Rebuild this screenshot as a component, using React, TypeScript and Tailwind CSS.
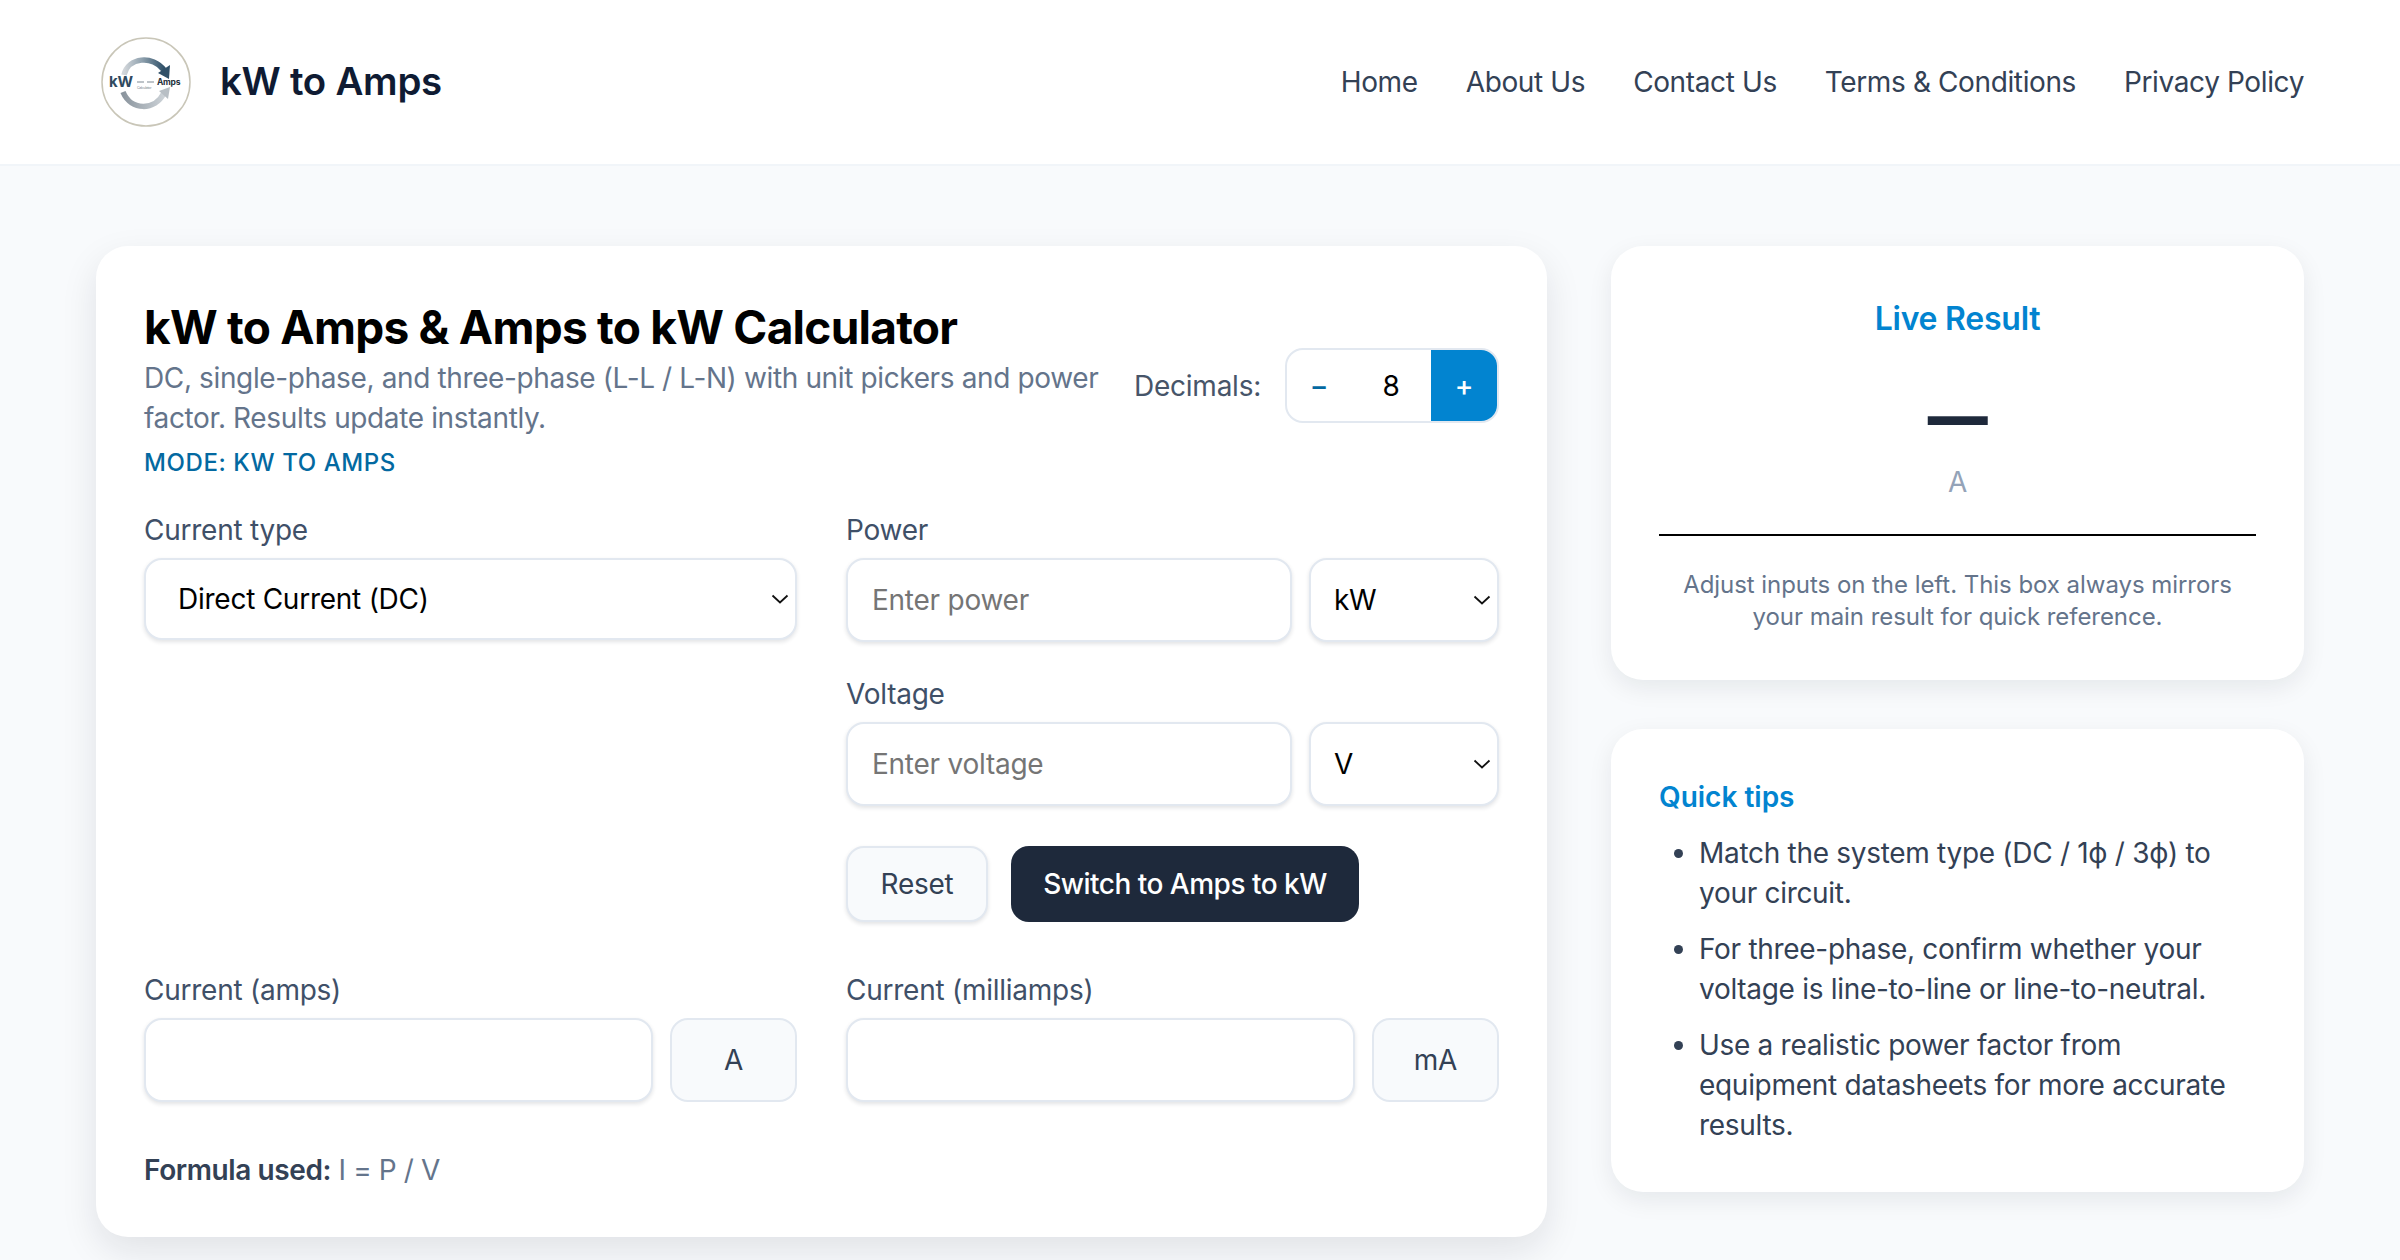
import { useState } from "react";

const navLinks = ["Home", "About Us", "Contact Us", "Terms & Conditions", "Privacy Policy"];

const tips = [
  "Match the system type (DC / 1ϕ / 3ϕ) to your circuit.",
  "For three-phase, confirm whether your voltage is line-to-line or line-to-neutral.",
  "Use a realistic power factor from equipment datasheets for more accurate results.",
];

const fieldClass =
  "w-full rounded-[18px] border-2 border-[#e2e8f0] bg-white text-[28px] text-black shadow-[0_2px_4px_rgba(15,23,42,0.12)] outline-none";

const Logo = () => (
  <svg width="90" height="90" viewBox="0 0 90 90" className="shrink-0">
    <defs>
      <linearGradient id="arcTop" x1="0" y1="0" x2="1" y2="0">
        <stop offset="0" stopColor="#d2d6da" />
        <stop offset="0.45" stopColor="#8fa1ae" />
        <stop offset="1" stopColor="#2f5068" />
      </linearGradient>
      <linearGradient id="arcBottom" x1="0" y1="0" x2="1" y2="0">
        <stop offset="0" stopColor="#8b959e" />
        <stop offset="1" stopColor="#ccd2d7" />
      </linearGradient>
    </defs>
    <circle cx="45" cy="45" r="44" fill="#fff" stroke="#c9c6b8" strokeWidth="1.5" />
    <path d="M23 38 C27 20 52 18 63 33" fill="none" stroke="url(#arcTop)" strokeWidth="5.5" />
    <path d="M57 36 L69 28 L68 42 Z" fill="#2f5068" />
    <path d="M22 55 C30 74 54 74 63 56" fill="none" stroke="url(#arcBottom)" strokeWidth="5.5" />
    <path d="M58 54 L69 50 L67 62 Z" fill="#b8bfc5" />
    <text x="8" y="50" fontFamily="Inter, sans-serif" fontWeight="700" fontSize="15" fill="#2f4a60">
      kW
    </text>
    <text x="56" y="48" fontFamily="Inter, sans-serif" fontWeight="700" fontSize="8.5" fill="#26323c">
      Amps
    </text>
    <text x="36" y="52" fontFamily="Inter, sans-serif" fontSize="3.5" fill="#7a858e">
      Calculator
    </text>
    <path d="M36 45 H43 M46 45 H53" stroke="#a9b1b8" strokeWidth="1.5" />
  </svg>
);

const SelectField = ({ value, className, height }: { value: string; className: string; height: string }) => (
  <div className={`relative ${className}`}>
    <select
      defaultValue={value}
      className={`${fieldClass} ${height} appearance-none ${value.length > 3 ? "pl-[32px]" : "pl-[23px]"}`}
    >
      <option>{value}</option>
    </select>
    <svg
      width="18"
      height="10"
      viewBox="0 0 18 10"
      fill="none"
      className="pointer-events-none absolute right-[8px] top-1/2 -translate-y-1/2"
    >
      <path d="M1.5 1.5 L9 8.5 L16.5 1.5" stroke="#111" strokeWidth="1.8" />
    </svg>
  </div>
);

const Label = ({ children }: { children: string }) => (
  <label className="mb-[8px] block text-[28px] leading-[40px] text-[#3f5068]">{children}</label>
);

const UnitBox = ({ unit }: { unit: string }) => (
  <div className="flex h-[84px] w-[127px] shrink-0 items-center justify-center rounded-[18px] border-2 border-[#e2e8f0] bg-[#f8fafc] text-[28px] text-[#334155]">
    {unit}
  </div>
);

const App = () => {
  const [decimals, setDecimals] = useState<number>(8);

  return (
    <div className="h-[1260px] overflow-hidden bg-[#f8fafc] font-['Inter',sans-serif] tracking-[-0.25px]">
      <header className="flex h-[166px] items-center justify-between border-b-2 border-[#f1f5f9] bg-white px-[96px]">
        <div className="flex items-center gap-[29px] pl-[5px]">
          <Logo />
          <span className="text-[38.4px] font-semibold text-[#0f1b33]">kW to Amps</span>
        </div>
        <nav className="flex gap-[48px] tracking-[-0.38px]">
          {navLinks.map((link) => (
            <a key={link} className="text-[28px] text-[#334155]">
              {link}
            </a>
          ))}
        </nav>
      </header>

      <main className="flex items-start gap-[64px] px-[96px] pt-[80px]">
        <section className="w-[1451px] shrink-0 rounded-[32px] bg-white pt-[48px] pr-[48px] pb-[47px] pl-[48px] shadow-[0_14px_36px_rgba(15,23,42,0.1)]">
          <div className="flex items-start justify-between">
            <div className="w-[970px]">
              <h1 className="-mb-[2px] text-[46px] font-bold leading-[66px] tracking-[-0.75px] text-black">
                kW to Amps &amp; Amps to kW Calculator
              </h1>
              <p className="text-[28px] leading-[40px] tracking-[-0.37px] text-[#64748b]">
                DC, single-phase, and three-phase (L-L / L-N) with unit pickers and power factor. Results update
                instantly.
              </p>
              <p className="mt-[7px] text-[24px] font-medium uppercase leading-[36px] tracking-[0.6px] text-[#0369a1]">
                Mode: kW to Amps
              </p>
            </div>
            <div className="mt-[54px] flex shrink-0 items-center gap-[24px]">
              <span className="text-[28px] text-[#475569]">Decimals:</span>
              <div className="flex h-[75px] w-[214px] overflow-hidden rounded-[18px] border-2 border-[#e2e8f0] bg-white">
                <button
                  onClick={() => setDecimals(decimals - 1)}
                  className="w-[64px] text-[28px] font-medium text-[#0369a1]"
                >
                  −
                </button>
                <div className="flex flex-1 items-center justify-center text-[28px] text-black">{decimals}</div>
                <button
                  onClick={() => setDecimals(decimals + 1)}
                  className="w-[66px] bg-[#0284d0] text-[28px] font-medium text-white"
                >
                  +
                </button>
              </div>
            </div>
          </div>

          <div className="mt-[29px] grid grid-cols-2 gap-x-[49px]">
            <div>
              <Label>Current type</Label>
              <SelectField value="Direct Current (DC)" className="w-full" height="h-[82px]" />
            </div>
            <div className="flex flex-col">
              <Label>Power</Label>
              <div className="flex gap-[17px]">
                <input
                  placeholder="Enter power"
                  className={`${fieldClass} h-[84px] min-w-0 flex-1 px-[24px] placeholder:text-[#757575]`}
                />
                <SelectField value="kW" className="w-[190px] shrink-0" height="h-[84px]" />
              </div>
              <div className="mt-[32px]">
                <Label>Voltage</Label>
              </div>
              <div className="flex gap-[17px]">
                <input
                  placeholder="Enter voltage"
                  className={`${fieldClass} h-[84px] min-w-0 flex-1 px-[24px] placeholder:text-[#757575]`}
                />
                <SelectField value="V" className="w-[190px] shrink-0" height="h-[84px]" />
              </div>
              <div className="mt-[40px] flex gap-[23px]">
                <button className="h-[76px] w-[142px] rounded-[18px] border-2 border-[#e2e8f0] bg-[#f8fafc] text-[28px] text-[#334155] shadow-[0_2px_4px_rgba(15,23,42,0.12)]">
                  Reset
                </button>
                <button className="h-[76px] w-[348px] rounded-[18px] bg-[#1e293b] text-[28px] font-medium tracking-[-0.5px] text-white">
                  Switch to Amps to kW
                </button>
              </div>
            </div>
          </div>

          <div className="mt-[48px] grid grid-cols-2 gap-x-[49px]">
            <div>
              <Label>Current (amps)</Label>
              <div className="flex gap-[17px]">
                <input className={`${fieldClass} h-[84px] min-w-0 flex-1`} readOnly />
                <UnitBox unit="A" />
              </div>
            </div>
            <div>
              <Label>Current (milliamps)</Label>
              <div className="flex gap-[17px]">
                <input className={`${fieldClass} h-[84px] min-w-0 flex-1`} readOnly />
                <UnitBox unit="mA" />
              </div>
            </div>
          </div>

          <p className="mt-[48px] text-[28px] leading-[40px] tracking-[-0.4px] text-[#64748b]">
            <span className="font-semibold text-[#334155]">Formula used:</span> I = P / V
          </p>
        </section>

        <aside className="flex min-w-0 flex-1 flex-col gap-[49px]">
          <section className="h-[434px] rounded-[32px] bg-white px-[48px] pt-[49px] text-center shadow-[0_8px_24px_rgba(15,23,42,0.08)]">
            <h2 className="text-[32px] font-semibold leading-[48px] text-[#0284d0]">Live Result</h2>
            <div className="mt-[33px] text-[60px] font-black leading-[80px] text-[#1e293b]">—</div>
            <div className="mt-[6px] text-[28px] leading-[40px] text-[#94a3b8]">A</div>
            <div className="mt-[32px] border-t-2 border-black pt-[33px] text-[24px] leading-[32px] tracking-[-0.05px] text-[#64748b]">
              Adjust inputs on the left. This box always mirrors your main result for quick reference.
            </div>
          </section>

          <section className="h-[463px] rounded-[32px] bg-white px-[48px] pt-[48px] shadow-[0_8px_24px_rgba(15,23,42,0.08)]">
            <h3 className="text-[28px] font-semibold leading-[40px] tracking-normal text-[#0284d0]">Quick tips</h3>
            <ul className="mt-[16px] list-disc pl-[40px] text-[28px] leading-[40px] tracking-[-0.3px] text-[#334155]">
              {tips.map((tip) => (
                <li key={tip} className="mb-[16px]">
                  {tip}
                </li>
              ))}
            </ul>
          </section>
        </aside>
      </main>
    </div>
  );
};

export default App;
